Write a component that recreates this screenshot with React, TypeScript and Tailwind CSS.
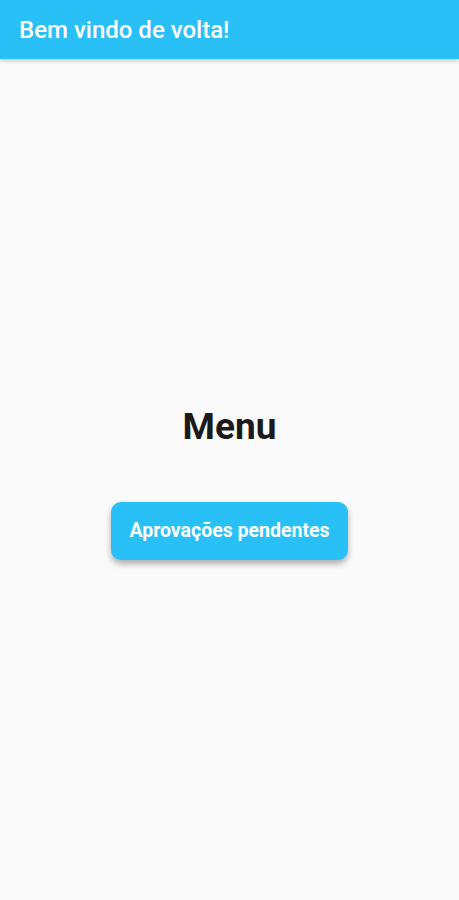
export default function App() {
  return (
    <div
      className="flex h-[900px] w-full flex-col bg-[#fafafa]"
      style={{ fontFamily: "Roboto, 'Liberation Sans', sans-serif" }}
    >
      <header className="flex h-[59px] shrink-0 items-center bg-[#29c0f8] px-[19px] shadow-[0_2px_4px_rgba(0,0,0,0.2)]">
        <h1 className="text-[24px] font-medium text-white">Bem vindo de volta!</h1>
      </header>
      <main className="flex flex-1 flex-col items-center justify-center pt-[9px]">
        <h2 className="text-[37px] font-bold leading-none text-[#1a1a1a]">Menu</h2>
        <button className="mt-[57px] h-[58px] w-[237px] rounded-[10px] bg-[#29c0f8] text-[19.5px] font-bold text-white shadow-[0_4px_6px_rgba(0,0,0,0.3)]">
          Aprovações pendentes
        </button>
      </main>
    </div>
  );
}
